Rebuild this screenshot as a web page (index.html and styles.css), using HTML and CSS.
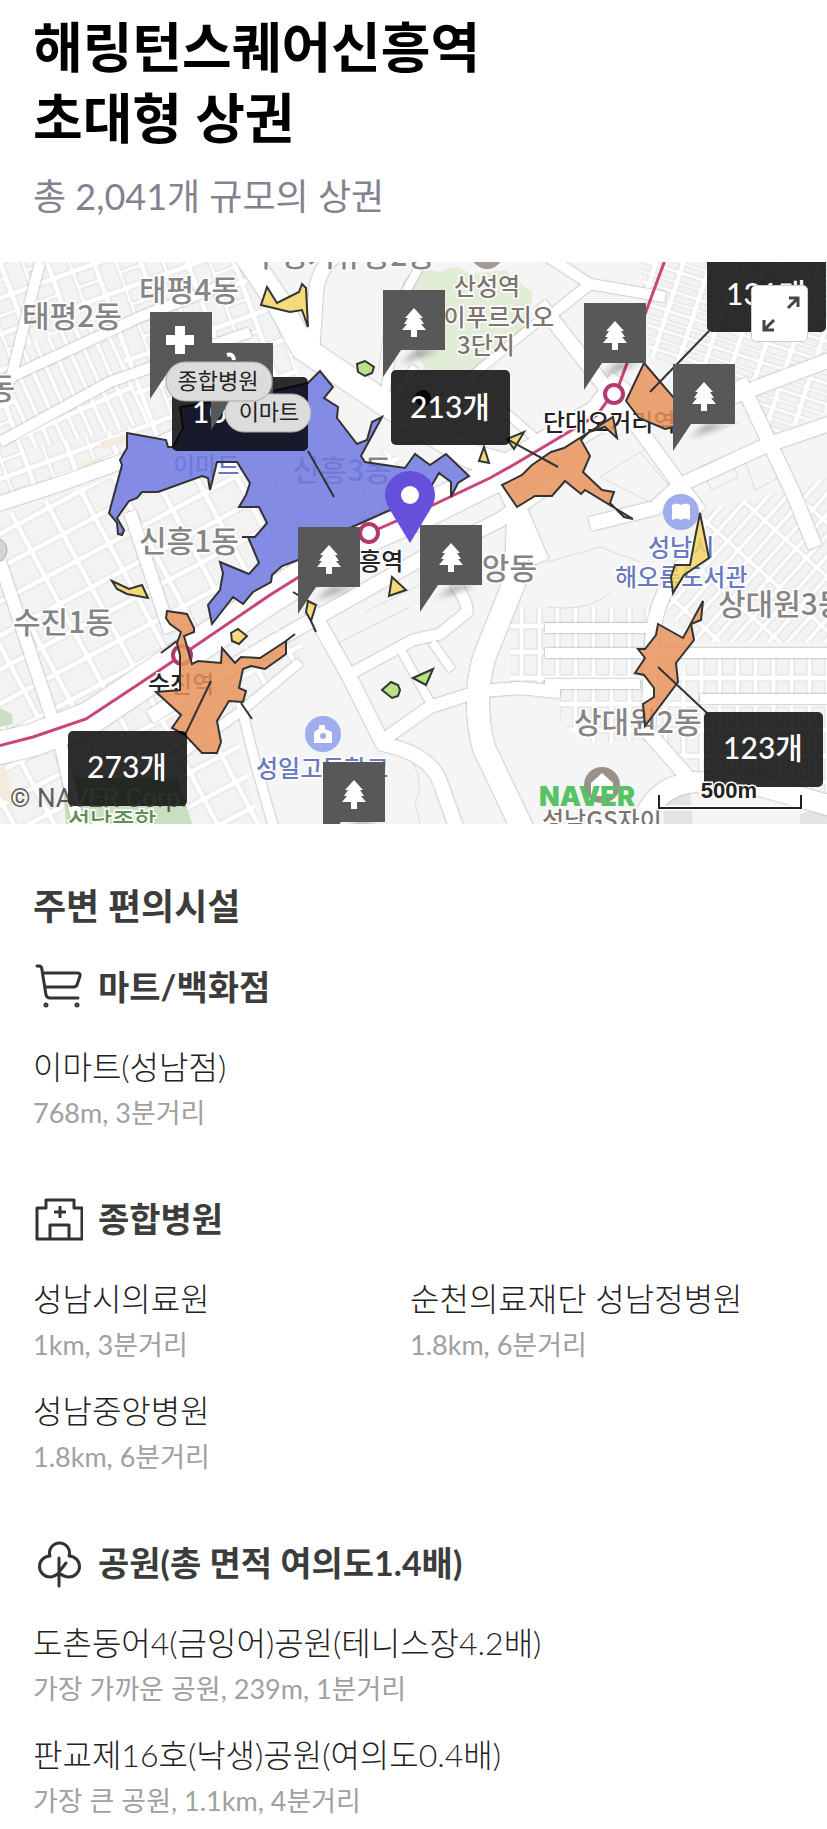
FILE: index.html
```html
<!DOCTYPE html>
<html lang="ko">
<head>
    <meta charset="UTF-8">
    <meta name="viewport" content="width=device-width, initial-scale=1.0">
    <title>해링턴스퀘어신흥역 상권</title>
    <link rel="stylesheet" href="styles.css">
</head>
<body>

    <header class="page-header">
        <h1>해링턴스퀘어신흥역<br>초대형 상권</h1>
        <p class="subtitle">총 2,041개 규모의 상권</p>
    </header>

    <section class="map">
        <svg class="map-canvas" viewBox="0 0 827 562" preserveAspectRatio="xMidYMid slice" role="img" aria-label="상권 지도">
            <defs>
                <pattern id="blocksWest" width="44" height="34" patternUnits="userSpaceOnUse" patternTransform="rotate(-20)">
                    <rect width="44" height="34" fill="#fff"/>
                    <rect class="block" x="3" y="3" width="16" height="28"/>
                    <rect class="block" x="23" y="3" width="18" height="12"/>
                    <rect class="block" x="23" y="19" width="18" height="12"/>
                </pattern>
                <pattern id="blocksNarrow" width="14" height="56" patternUnits="userSpaceOnUse" patternTransform="rotate(-24)">
                    <rect width="14" height="56" fill="#fff"/>
                    <rect class="block" x="2" y="3" width="9" height="50"/>
                </pattern>
                <pattern id="blocksSouth" width="36" height="30" patternUnits="userSpaceOnUse" patternTransform="rotate(-28)">
                    <rect width="36" height="30" fill="#fff"/>
                    <rect class="block" x="3" y="3" width="30" height="24"/>
                </pattern>
                <pattern id="blocksEast" width="26" height="20" patternUnits="userSpaceOnUse" patternTransform="rotate(18)">
                    <rect width="26" height="20" fill="#fff"/>
                    <rect class="block" x="3" y="2" width="20" height="7"/>
                    <rect class="block" x="3" y="12" width="20" height="6"/>
                </pattern>
                <pattern id="blocksHill" width="40" height="14" patternUnits="userSpaceOnUse" patternTransform="rotate(-48)">
                    <rect width="40" height="14" fill="#fff"/>
                    <rect class="block" x="2" y="2" width="35" height="9"/>
                </pattern>
                <pattern id="blocksGrid" width="18" height="26" patternUnits="userSpaceOnUse">
                    <rect width="18" height="26" fill="#fff"/>
                    <rect class="block" x="2" y="3" width="13" height="20"/>
                </pattern>
                <filter id="soft" x="-50%" y="-50%" width="200%" height="200%">
                    <feGaussianBlur stdDeviation="3"/>
                </filter>

                <g id="roads">
                    <path stroke-width="14" d="M-5 243L60 222L126 198L180 172L240 158L290 140"/>
                    <path stroke-width="24" d="M244 -10L280 43L303 86L383 140L470 194L520 208"/>
                    <path stroke-width="14" d="M334 -5Q318 8 316 30L312 92"/>
                    <path stroke-width="32" d="M-5 487L33 478L90 456L270 335L369 273L433 245L515 204L600 153L625 120"/>
                    <path stroke-width="14" d="M150 455L270 382L417 299L500 258L560 215"/>
                    <path stroke-width="14" d="M310 345L350 416L383 482Q430 492 440 520L458 570"/>
                    <path stroke-width="11" d="M350 412L413 378L440 372L467 350Q468 340 455 322"/>
                    <path stroke-width="12" d="M383 478L430 445L480 429L520 426L560 430"/>
                    <path stroke-width="8" d="M402 390L430 440M432 380L452 408"/>
                    <path stroke-width="22" d="M518 255L516 316L484 396Q472 440 484 486L524 570"/>
                    <path stroke-width="18" d="M500 210L523 260L540 300"/>
                    <path stroke-width="14" d="M540 42L584 98L640 168L680 223L700 250"/>
                    <path stroke-width="14" d="M590 262L655 246L680 223L767 183L835 160"/>
                    <path stroke-width="14" d="M740 118L794 233L815 285"/>
                    <path stroke-width="14" d="M700 150L737 133L835 96"/>
                    <path stroke-width="10" d="M548 -5L590 22L665 35M590 22L555 50"/>
                    <path stroke-width="14" d="M700 285Q655 325 652 380L648 470L692 520"/>
                    <path stroke-width="20" d="M640 570Q650 526 692 520L760 524L835 545"/>
                    <path stroke-width="10" d="M545 391H835M700 437H835M545 366L650 366M545 422H640"/>
                    <path stroke-width="12" d="M0 300L60 480L80 570M130 250L170 370"/>
                    <path stroke-width="10" d="M0 120L140 55L230 20M0 180L110 120L250 70M40 0L10 120"/>
                    <path stroke-width="9" d="M170 500L240 450L300 400M240 440L255 500L275 570"/>
                    <path stroke-width="8" d="M415 105L385 150M425 -5L400 40L385 130M440 140L550 50M470 120L540 180"/>
                </g>
                <g id="flag">
                    <path d="M0 87L34 60H56L16 74Z" fill="#000" opacity=".35" filter="url(#soft)"/>
                    <path d="M0 0H62V60H18L0 87Z" fill="#585858"/>
                </g>
                <path id="tree" fill="#fff" d="M31 18L40 28H37L41 34H38L43 40H34V47H28V40H19L24 34H21L25 28H22Z"/>
            </defs>

            <rect width="827" height="562" fill="#f5f5f6"/>

            <!-- city blocks -->
            <path fill="url(#blocksWest)" d="M0 0H240L285 60L300 120L120 195L0 235Z"/>
            <path fill="url(#blocksNarrow)" d="M10 90L110 50L130 120L150 160L20 190Z"/>
            <path fill="url(#blocksSouth)" d="M0 255L300 150L440 215L270 325L80 450L0 470Z"/>
            <path fill="url(#blocksSouth)" d="M0 490L90 470L290 360L310 400L230 450L260 562H0Z"/>
            <path fill="url(#blocksEast)" d="M640 0H827V90L740 125L650 95Z"/>
            <path fill="url(#blocksHill)" d="M700 250L800 225L827 215V380H690L665 340Z"/>
            <path fill="url(#blocksGrid)" d="M510 345H655V480H590L560 460V430H510Z"/>
            <path fill="url(#blocksGrid)" d="M690 395H827V530L700 510L655 470Z"/>
            <path fill="url(#blocksEast)" d="M738 140L827 110V150L765 175Z"/>

            <!-- parks -->
            <path fill="#e2edd8" d="M402 22Q412 2 440 10Q456 0 470 12L505 8L532 30L531 58L512 86L484 108H426L404 70Z"/>
            <path fill="#c9dfc0" d="M0 446L12 452L13 462L0 465ZM62 516H178L192 562H66Z"/>
            <path fill="#f3ebdd" d="M100 180L125 172V180L102 188ZM80 202L103 194V200L82 208ZM0 500L6 506L15 545L0 535Z"/>
            <path fill="#e4e4e5" d="M664 540Q670 524 690 524L693 562H664ZM800 552L827 545V562H800Z"/>

            <g fill="none" stroke="#dcdcde" stroke-linejoin="round">
                <path d="M413 500Q425 525 415 540L420 562M320 20L318 90L385 135M330 385L410 345M385 60L378 110M365 350L430 318"/>
                <path d="M547 345Q590 350 610 330M548 300L600 285L640 300M600 215L640 190L670 225L650 240L620 225Z"/>
                <path d="M700 205L730 193L738 215L712 228ZM742 190L768 180L780 215L755 228ZM690 110L725 165L740 160"/>
            </g>
            <g class="road-edge"><use href="#roads"/></g>
            <g class="road-fill"><use href="#roads"/></g>

            <!-- subway line -->
            <path fill="none" stroke="#c9447c" stroke-width="3" d="M665 -2L619 123L597 153L515 202L490 216L433 243L369 271L270 333L182 393L157 410L86 457L33 475L-2 484"/>
            <g fill="#fff" stroke="#b23a6e" stroke-width="4">
                <circle cx="614" cy="132" r="9"/>
                <circle cx="369" cy="271" r="9"/>
                <circle cx="182" cy="393" r="9"/>
            </g>

            <!-- places -->
            <circle cx="487" cy="-9" r="16" fill="#a39a95"/>
            <circle cx="-5" cy="288" r="12" fill="#d5d5d5" stroke="#aaa"/>
            <circle cx="681" cy="250" r="18" fill="#9fadec"/>
            <path fill="#fff" d="M672 243Q677 240 681 243Q685 240 690 243V258Q685 255 681 258Q677 255 672 258Z"/>
            <circle cx="323" cy="472" r="18" fill="#9fadec"/>
            <path fill="#fff" d="M314 470L319 467V463H325V467L332 470V481H314Z"/>
            <circle cx="323" cy="474" r="3" fill="#9fadec"/>
            <circle cx="602" cy="523" r="18" fill="#9a908a"/>
            <path fill="#fff" d="M591 521L602 511L613 521V534H591Z"/>

            <g class="district">
                <text x="22" y="65">태평2동</text>
                <text x="139" y="39">태평4동</text>
                <text x="139" y="290">신흥1동</text>
                <text x="13" y="371">수진1동</text>
                <text x="292" y="219">신흥3동</text>
                <text x="15" y="137" text-anchor="end">태평1동</text>
                <text x="537" y="317" text-anchor="end">중앙동</text>
                <text x="718" y="353">상대원3동</text>
                <text x="574" y="471">상대원2동</text>
                <text x="435" y="4" text-anchor="end">수정커뮤중2동</text>
            </g>
            <g class="estate">
                <text x="487" y="33" text-anchor="middle">산성역</text>
                <text x="554" y="64" text-anchor="end">자이푸르지오</text>
                <text x="486" y="92" text-anchor="middle">3단지</text>
                <text x="542" y="567">성남GS자이</text>
            </g>
            <g class="place">
                <text x="173" y="212">이마트</text>
                <text x="648" y="294">성남시</text>
                <text x="615" y="324">해오름도서관</text>
                <text x="256" y="515">성일고등학교</text>
            </g>
            <text class="park" x="68" y="568">성남종합</text>
            <g class="station">
                <text x="543" y="169">단대오거리역</text>
                <text x="337" y="308">신흥역</text>
                <text x="148" y="431">수진역</text>
            </g>

            <!-- commercial areas -->
            <g class="area area-blue">
                <path d="M127 171L166 178L168 185L173 185L183 166L180 145L210 140L260 132L308 121L320 109L333 125L324 136L338 145L337 156L357 182L367 178L372 160L382 155L361 194L365 200L405 206L415 192L430 203L446 192L469 214L458 221L451 235L451 220L439 211L432 223L420 238L388 249L350 266L298 298L282 304L272 313L271 320L253 330L243 342L233 335L212 362L208 343L220 328L223 311L220 300L249 312L259 301L248 275H242H255L267 261L259 245H239L246 233L250 221L237 200H217L210 228L208 216L202 214L158 230H142L137 236L129 239L117 256L124 268L122 273L118 272L117 261L109 251L122 203L120 198L127 186Z"/>
            </g>
            <g class="area area-orange">
                <path d="M502 223L517 245L535 234H552L565 219L581 232L585 228L633 257L624 255L610 241L614 230L602 228L583 210L590 194L581 178L589 170L605 165L617 176L613 155L564 186L551 190L532 203L522 213Z"/>
                <path d="M644 101L674 136V165L665 167L639 156L626 139Z"/>
                <path d="M167 349L187 352L194 366V370L184 374L192 402L198 399L221 401L222 386L235 401L241 395L260 396L286 379V392L265 407L251 404L243 407L239 426L246 429L243 440L229 439L217 459L221 480L217 491H202L185 473L172 466L181 453L156 430L180 428V393L177 381L181 370L170 362L166 356Z"/>
                <path d="M658 362L683 376L703 339L701 358L691 362L694 378L676 401L678 420L645 464L643 442L654 435V426L644 413L635 411L645 396L638 387H645L656 373Z"/>
            </g>
            <g class="area area-yellow">
                <path d="M267 25L277 41L299 30L302 22L306 26L308 65L302 48L290 50L261 43Z"/>
                <path d="M484 185L489 201L479 199ZM524 170L514 187L507 177Z"/>
                <path d="M112 319L129 327L142 323L148 336L127 332L117 327Z"/>
                <path d="M238 367L247 374L239 382L232 379L231 371Z"/>
                <path d="M700 251L709 296L684 313L673 331L671 315L675 303H690L695 276Z"/>
                <path d="M392 315L406 328L389 334ZM308 339L316 343L311 359L306 350Z"/>
            </g>
            <g class="area area-green">
                <path d="M365 99L374 105L372 111L365 114L358 110L357 102Z"/>
                <path d="M382 428L391 420L398 423L400 428L398 434L392 436Z"/>
                <path d="M413 416L433 407L426 423Z"/>
            </g>
            <path class="leader" d="M650 130L709 69M507 177L558 205M308 189L334 235M161 391L177 379M241 441L252 457M211 419L185 473M286 379L295 372M658 405L707 451M293 330L308 339M311 359L316 370"/>

            <!-- store counts -->
            <circle cx="423" cy="136" r="8" fill="#222"/>
            <g class="count">
                <rect x="172" y="115" width="136" height="74" rx="5"/>
                <text x="192" y="161">1063개</text>
                <rect x="391" y="108" width="119" height="75" rx="5"/>
                <text x="450" y="156" text-anchor="middle">213개</text>
                <rect x="68" y="469" width="119" height="75" rx="5"/>
                <text x="127" y="516" text-anchor="middle">273개</text>
                <rect x="704" y="450" width="119" height="75" rx="5"/>
                <text x="763" y="497" text-anchor="middle">123개</text>
                <rect x="707" y="-5" width="119" height="75" rx="5"/>
                <text x="766" y="43" text-anchor="middle">131개</text>
            </g>

            <!-- flags -->
            <g transform="translate(211 81)">
                <use href="#flag"/>
                <path d="M16 12Q22 10 23 17" fill="none" stroke="#fff" stroke-width="4"/>
            </g>
            <g transform="translate(150 50)">
                <use href="#flag"/>
                <path d="M25 14H35V23H44V33H35V42H25V33H16V23H25Z" fill="#fff"/>
            </g>
            <g transform="translate(383 28)"><use href="#flag"/><use href="#tree"/></g>
            <g transform="translate(584 41)"><use href="#flag"/><use href="#tree"/></g>
            <g transform="translate(673 102)"><use href="#flag"/><use href="#tree"/></g>
            <g transform="translate(298 265)"><use href="#flag"/><use href="#tree"/></g>
            <g transform="translate(420 263)"><use href="#flag"/><use href="#tree"/></g>
            <g transform="translate(323 500)"><use href="#flag"/><use href="#tree"/></g>

            <g class="pill">
                <rect x="225" y="132" width="86" height="38" rx="19"/>
                <text x="269" y="158" text-anchor="middle">이마트</text>
                <rect x="166" y="100" width="106" height="39" rx="19"/>
                <text x="218" y="127" text-anchor="middle">종합병원</text>
            </g>

            <path fill="#6550dc" d="M410 281L390 248Q385 240 385 233A25 24 0 0 1 435 233Q435 240 430 248Z"/>
            <circle cx="410" cy="233" r="9" fill="#fff"/>

            <text class="copyright" x="10" y="545">© NAVER Corp.</text>
            <text class="naver" x="539" y="544">NAVER</text>
            <text class="scale" x="729" y="536" text-anchor="middle">500m</text>
            <path d="M659 533V546H801V533" fill="none" stroke="#fff" stroke-width="5"/>
            <path d="M659 533V546H801V533" fill="none" stroke="#222" stroke-width="2"/>
        </svg>

        <button class="expand" type="button" aria-label="지도 크게 보기">
            <svg viewBox="0 0 57 57" width="57" height="57" fill="none" stroke="#444" stroke-width="3">
                <path d="M37 12H46V21M46 12L36 22M12 34V44H22M12 44L22 34"/>
            </svg>
        </button>
    </section>

    <main class="facilities">
        <h2>주변 편의시설</h2>

        <section class="group">
            <h3>
                <svg class="icon" viewBox="0 0 50 50" fill="none" stroke="#333" stroke-width="3" stroke-linecap="round" stroke-linejoin="round">
                    <path d="M4 4H6Q9 4 9 8L13 33Q14 36 17 36H45M10 11H44Q48 11 47 14L44 23Q43 25 40 25H12"/>
                    <circle cx="13" cy="43" r="1"/>
                    <circle cx="44" cy="43" r="1"/>
                </svg>
                마트/백화점
            </h3>
            <ul class="places">
                <li>
                    <p class="name">이마트(성남점)</p>
                    <p class="distance">768m, 3분거리</p>
                </li>
            </ul>
        </section>

        <section class="group">
            <h3>
                <svg class="icon" viewBox="0 0 50 50" fill="none" stroke="#333" stroke-width="3" stroke-linejoin="round">
                    <path d="M4 45V14H13V6H41V14H49V45ZM17 45V31H36V45M27 12V24M21 18H33"/>
                </svg>
                종합병원
            </h3>
            <ul class="places">
                <li>
                    <p class="name">성남시의료원</p>
                    <p class="distance">1km, 3분거리</p>
                </li>
                <li>
                    <p class="name">순천의료재단 성남정병원</p>
                    <p class="distance">1.8km, 6분거리</p>
                </li>
                <li>
                    <p class="name">성남중앙병원</p>
                    <p class="distance">1.8km, 6분거리</p>
                </li>
            </ul>
        </section>

        <section class="group">
            <h3>
                <svg class="icon" viewBox="0 0 50 50" fill="none" stroke="#333" stroke-width="3" stroke-linecap="round" stroke-linejoin="round">
                    <path d="M26 20V48M26 34L33 25M26 35C22 38 20 39 17 39A10 10 0 0 1 17 18A10 10 0 1 1 36 18A10 10 0 0 1 36 39C32 39 30 38 26 35"/>
                </svg>
                공원(총 면적 여의도1.4배)
            </h3>
            <ul class="places wide">
                <li>
                    <p class="name">도촌동어4(금잉어)공원(테니스장4.2배)</p>
                    <p class="distance">가장 가까운 공원, 239m, 1분거리</p>
                </li>
                <li>
                    <p class="name">판교제16호(낙생)공원(여의도0.4배)</p>
                    <p class="distance">가장 큰 공원, 1.1km, 4분거리</p>
                </li>
            </ul>
        </section>
    </main>

</body>
</html>
```

FILE: styles.css
```css
body {
    font-family: Lato, "Noto Sans CJK KR", sans-serif;
    margin: 0;
    background-color: #fff;
    color: #3c3c3c;
}
h1, h2, h3, p, ul {
    margin: 0;
    padding: 0;
}
.page-header {
    padding: 12px 33px 40px;
}
h1 {
    font-size: 54px;
    line-height: 71px;
    font-weight: 700;
    color: #000;
}
.subtitle {
    margin-top: 16px;
    font-size: 36px;
    line-height: 52px;
    font-weight: 400;
    color: #85828f;
}

/* map */
.map {
    position: relative;
    overflow: hidden;
}
.map-canvas {
    display: block;
    width: 100%;
    height: auto;
    font-family: Lato, "Noto Sans CJK KR", sans-serif;
}
.block {
    fill: #f3f3f4;
    stroke: #dededf;
}
.road-edge, .road-fill {
    fill: none;
    stroke-linejoin: round;
}
.road-edge {
    stroke: #fff;
    filter: drop-shadow(0 0 1px #909095);
}
.road-fill {
    stroke: #fff;
}
.district, .estate, .place, .park, .station {
    font-family: "Noto Sans CJK KR", sans-serif;
    font-weight: 500;
    stroke: #fff;
    stroke-width: 3px;
    paint-order: stroke;
}
.district {
    font-size: 30px;
    fill: #858585;
}
.estate, .place, .park, .station {
    font-size: 24px;
}
.estate {
    fill: #7d746f;
}
.place {
    fill: #6a7ac0;
}
.park {
    fill: #5f8f53;
}
.station {
    fill: #222;
}
.area {
    stroke: #333;
    stroke-width: 2px;
    fill-opacity: 0.85;
}
.area-blue {
    fill: #6f78e2;
}
.area-orange {
    fill: #e9935a;
}
.area-yellow {
    fill: #f3d562;
}
.area-green {
    fill: #aedd72;
}
.leader {
    fill: none;
    stroke: #333;
    stroke-width: 2px;
}
.count rect {
    fill: #000;
    fill-opacity: 0.82;
}
.count text {
    fill: #fff;
    font-size: 30px;
    font-weight: 500;
}
.pill rect {
    fill: #dcdcdc;
    stroke: #aaa;
}
.pill text {
    font-size: 22px;
    fill: #222;
}
.copyright {
    font-family: Roboto, sans-serif;
    font-size: 26px;
    fill: #333;
    fill-opacity: 0.8;
}
.naver {
    font-family: Inter, sans-serif;
    font-size: 27px;
    font-weight: 900;
    fill: #58c264;
}
.scale {
    font-family: "Liberation Sans", sans-serif;
    font-size: 22px;
    font-weight: 700;
    fill: #222;
    stroke: #fff;
    stroke-width: 3px;
    paint-order: stroke;
}
.expand {
    position: absolute;
    top: 23px;
    right: 19px;
    width: 57px;
    height: 57px;
    padding: 0;
    border: 1px solid #ccc;
    border-radius: 5px;
    background-color: #fff;
    cursor: pointer;
}
.expand svg {
    display: block;
}

/* facilities */
.facilities {
    padding: 56px 40px 7px 33px;
}
h2 {
    font-size: 36px;
    line-height: 52px;
    margin-bottom: 30px;
}
h3 {
    display: flex;
    align-items: center;
    gap: 15px;
    font-size: 34px;
    line-height: 50px;
    margin-bottom: 31px;
}
.icon {
    width: 50px;
    height: 50px;
    flex: none;
}
.group + .group {
    margin-top: 60px;
}
.places {
    display: grid;
    grid-template-columns: 1fr 1fr;
    row-gap: 21px;
    list-style: none;
}
.places.wide {
    grid-template-columns: 1fr;
}
.name {
    font-size: 32px;
    line-height: 48px;
    font-weight: 300;
    color: #222;
}
.distance {
    padding-top: 1px;
    font-size: 27px;
    line-height: 42px;
    font-weight: 400;
    color: #a0a0a0;
}
```
